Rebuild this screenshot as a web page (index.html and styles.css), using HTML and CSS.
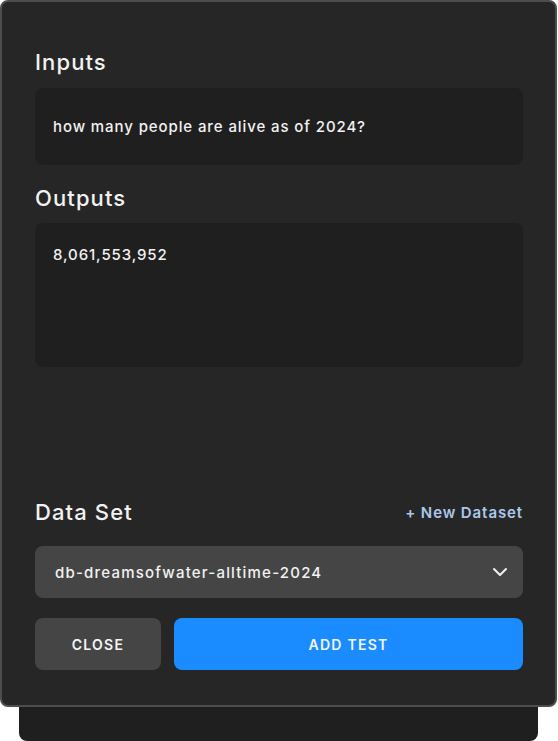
FILE: index.html
```html
<!DOCTYPE html>
<html lang="en">
<head>
<meta charset="utf-8">
<title>Add Test</title>
<link rel="stylesheet" href="styles.css">
</head>
<body>
<div class="modal">
  <h2 class="title">Inputs</h2>
  <div class="field field-input">how many people are alive as of 2024?</div>
  <h2 class="title title-outputs">Outputs</h2>
  <div class="field field-output">8,061,553,952</div>
  <div class="dataset-row">
    <h2 class="title">Data Set</h2>
    <a class="new-link" href="#">+ New Dataset</a>
  </div>
  <div class="select">
    <span>db-dreamsofwater-alltime-2024</span>
    <svg class="chev" width="16" height="10" viewBox="0 0 16 10"><path d="M2 2 L8 8 L14 2" fill="none" stroke="#f0f0f0" stroke-width="2" stroke-linecap="round" stroke-linejoin="round"/></svg>
  </div>
  <div class="actions">
    <button class="btn btn-close">CLOSE</button>
    <button class="btn btn-add">ADD TEST</button>
  </div>
</div>
<div class="under"></div>
</body>
</html>
```
FILE: styles.css
```css
html, body {
  margin: 0;
  padding: 0;
  background: #ffffff;
}
body {
  width: 558px;
  height: 741px;
  overflow: hidden;
  font-family: Inter, "Open Sans", sans-serif;
  color: #f2f2f2;
}
.modal {
  box-sizing: border-box;
  width: 557px;
  height: 707px;
  background: #262626;
  border: 2px solid #4d4d4d;
  border-radius: 8px;
  padding: 48px 32px 35px 33px;
  display: flex;
  flex-direction: column;
}
.title {
  margin: 0;
  font-size: 22px;
  line-height: 24px;
  font-weight: 500;
  letter-spacing: 0.05em;
  color: #f2f2f2;
}
.title-outputs {
  margin-top: 21px;
}
.field {
  box-sizing: border-box;
  background: #1f1f1f;
  border-radius: 8px;
  padding: 0 18px;
  font-size: 15px;
  line-height: 22px;
  font-weight: 500;
  letter-spacing: 0.06em;
  color: #f2f2f2;
}
.field-input {
  margin-top: 14px;
  height: 77px;
  display: flex;
  align-items: center;
}
.field-output {
  margin-top: 13px;
  height: 144px;
  padding-top: 21px;
}
.dataset-row {
  margin-top: 133px;
  display: flex;
  justify-content: space-between;
  align-items: center;
}
.new-link {
  font-size: 15px;
  font-weight: 600;
  letter-spacing: 0.06em;
  color: #a9c8ec;
  text-decoration: none;
  margin-right: 0;
}
.select {
  margin-top: 22px;
  height: 52px;
  box-sizing: border-box;
  background: #454545;
  border-radius: 8px;
  padding: 0 15px 0 20px;
  display: flex;
  align-items: center;
  justify-content: space-between;
  font-size: 15px;
  font-weight: 500;
  letter-spacing: 0.08em;
}
.chev {
  display: block;
}
.actions {
  margin-top: 20px;
  display: flex;
  gap: 13px;
}
.btn {
  height: 52px;
  border: none;
  border-radius: 8px;
  font-family: inherit;
  font-size: 14px;
  font-weight: 600;
  letter-spacing: 0.09em;
  color: #f5f5f5;
  cursor: pointer;
}
.btn-close {
  width: 126px;
  background: #454545;
}
.btn-add {
  flex: 1;
  background: #1a8cff;
}
.under {
  margin: 0 20px 0 19px;
  height: 34px;
  background: #1f1f1f;
  border-radius: 0 0 8px 8px;
}
```
